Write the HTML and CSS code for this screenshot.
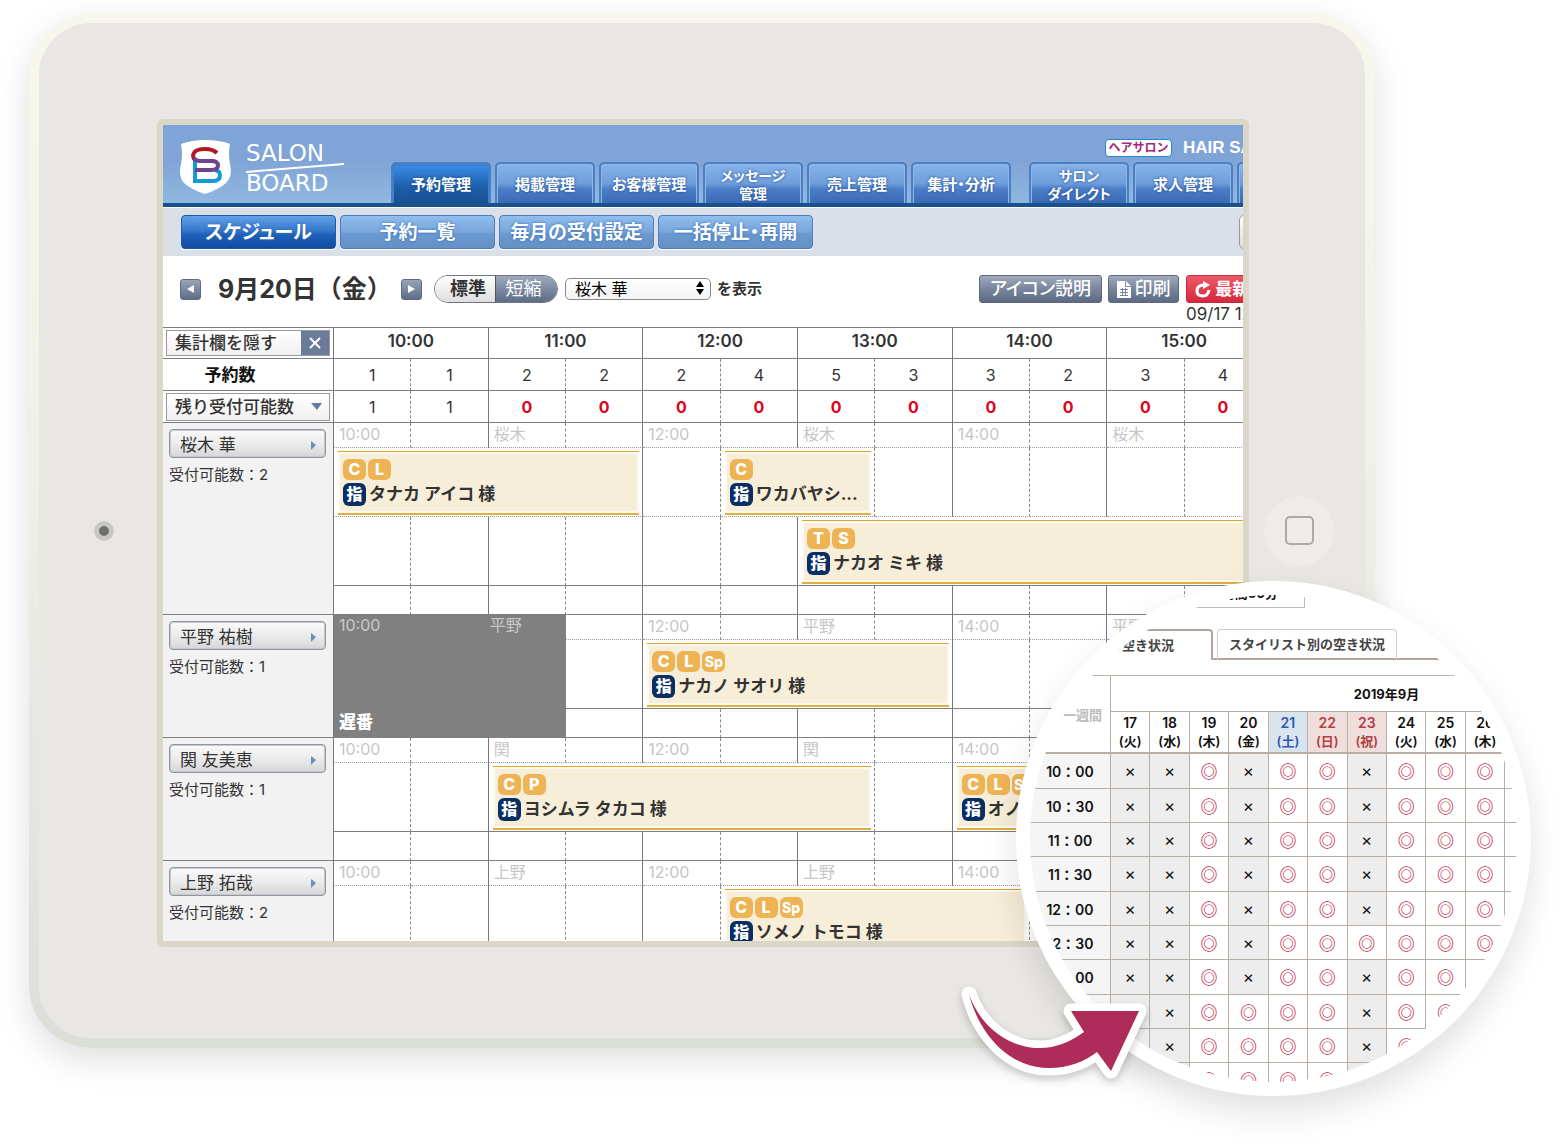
FILE: index.html
```html
<!DOCTYPE html>
<html lang="ja">
<head>
<meta charset="utf-8">
<title>SALON BOARD</title>
<link rel="stylesheet" href="styles.css">
</head>
<body>
<main class="stage">
  <div class="tablet">
    <div class="tablet-face">
      <span class="camera"></span>
      <div class="screen">
        <div class="app">
          <header class="header">
            <a class="logo" href="#">
              <svg class="logo-mark" viewBox="0 0 51 55" width="51" height="55" aria-hidden="true">
                <path fill="#fff" d="M1 4Q12 0 25 0Q40 0 50 4Q48 14 50 24Q53 36 46 43Q38 50 25 54Q12 50 4 43Q-2 36 1 24Q3 14 1 4Z"/>
                <g fill="none" stroke-width="4">
                  <path stroke="#129bd8" d="M15 19V41H33Q40 41 40 35Q40 31 35 30"/>
                  <path stroke="#b01822" d="M37 13Q33 9 25 9Q14 9 13 15Q13 18 15 20"/>
                  <path stroke="#6f4391" d="M14 18Q16 21 20 21H33Q38 22 38 25Q38 30 32 30H15"/>
                </g>
              </svg>
              <span class="logo-name">
                <span>SALON</span>
                <svg viewBox="0 0 98 10" width="98" height="10" aria-hidden="true"><path d="M0 9L98 1" stroke="#fff" stroke-width="2"/></svg>
                <span>BOARD</span>
              </span>
            </a>
            <div class="account"><span class="account-type">ヘアサロン</span><span>HAIR SALON</span></div>
            <nav class="tabs">
              <a class="tab tab-on" href="#">予約管理</a>
              <a class="tab" href="#">掲載管理</a>
              <a class="tab" href="#">お客様管理</a>
              <a class="tab tab-two" href="#">メッセージ<br>管理</a>
              <a class="tab" href="#">売上管理</a>
              <a class="tab" href="#">集計・分析</a>
              <a class="tab tab-two tab-group" href="#">サロン<br>ダイレクト</a>
              <a class="tab" href="#">求人管理</a>
              <a class="tab" href="#">設定</a>
            </nav>
          </header>
          <nav class="subnav">
            <a class="sub sub-on" href="#">スケジュール</a>
            <a class="sub" href="#">予約一覧</a>
            <a class="sub" href="#">毎月の受付設定</a>
            <a class="sub" href="#">一括停止・再開</a>
            <button class="help" type="button">ヘルプ</button>
          </nav>
          <div class="toolbar">
            <div class="day">
              <button class="step" type="button" aria-label="前日"><svg viewBox="0 0 7 8" width="7" height="8"><path fill="#fff" d="M7 0V8L0 4Z"/></svg></button>
              <h1>9月20日（金）</h1>
              <button class="step" type="button" aria-label="翌日"><svg viewBox="0 0 7 8" width="7" height="8"><path fill="#fff" d="M0 0V8L7 4Z"/></svg></button>
            </div>
            <div class="toggle"><button class="toggle-on" type="button">標準</button><button type="button">短縮</button></div>
            <label class="pick">
              <span class="pick-box">
                <select><option>桜木 華</option></select>
                <svg class="pick-arrows" viewBox="0 0 8 14" width="8" height="14" aria-hidden="true"><path d="M4 0L8 6H0ZM4 14L0 8H8Z"/></svg>
              </span>
              を表示
            </label>
            <div class="actions">
              <button class="action" type="button">アイコン説明</button>
              <button class="action action-print" type="button"><svg viewBox="0 0 14 17" width="14" height="17" aria-hidden="true"><path fill="#fff" d="M0 0H8V6H14V17H0ZM9 0L14 5H9Z"/><path stroke="#77849c" d="M3 8.500H11M3 11.500H11M3 14.500H11M5.500 7V15M8.500 7V15"/></svg>印刷</button>
              <div class="refresh">
                <button class="action action-red" type="button"><svg viewBox="0 0 16 17" width="16" height="17" aria-hidden="true"><path fill="none" stroke="#fff" stroke-width="3" d="M9 4Q2 4 2 10Q2 15 8 15Q13 15 14 9"/><path fill="#fff" d="M8 0L15 4L8 8Z"/></svg>最新に更新</button>
                <span>09/17 12:00</span>
              </div>
            </div>
          </div>

          <table class="schedule">
            <colgroup><col class="col-name"><col span="12"></colgroup>
            <thead>
              <tr class="row-hours">
                <th><button class="hide" type="button">集計欄を隠す<span class="hide-x"><svg viewBox="0 0 12 12" width="12" height="12" aria-hidden="true"><path stroke="#fff" stroke-width="2" d="M1 1L11 11M11 1L1 11"/></svg></span></button></th>
                <th colspan="2">10:00</th><th colspan="2">11:00</th><th colspan="2">12:00</th><th colspan="2">13:00</th><th colspan="2">14:00</th><th colspan="2">15:00</th>
              </tr>
              <tr class="row-count">
                <th><span class="count-title">予約数</span></th>
                <td class="half">1</td><td>1</td><td class="half">2</td><td>2</td><td class="half">2</td><td>4</td><td class="half">5</td><td>3</td><td class="half">3</td><td>2</td><td class="half">3</td><td>4</td>
              </tr>
              <tr class="row-count">
                <th><button class="remain" type="button">残り受付可能数<svg viewBox="0 0 11 7" width="11" height="7" aria-hidden="true"><path fill="#66799e" d="M0 0H11L6 7Z"/></svg></button></th>
                <td class="half">1</td><td>1</td><td class="half zero">0</td><td class="zero">0</td><td class="half zero">0</td><td class="zero">0</td><td class="half zero">0</td><td class="zero">0</td><td class="half zero">0</td><td class="zero">0</td><td class="half zero">0</td><td class="zero">0</td>
              </tr>
            </thead>
            <tbody>
              <tr class="row-label">
                <th class="staff" rowspan="4"><button class="staff-name" type="button">桜木 華<svg viewBox="0 0 5 9" width="5" height="9" aria-hidden="true"><path fill="#5e93c4" d="M0 0L5 4L0 9Z"/></svg></button><span>受付可能数：2</span></th>
                <td class="half">10:00</td><td></td><td class="half">桜木</td><td></td><td class="half">12:00</td><td></td><td class="half">桜木</td><td></td><td class="half">14:00</td><td></td><td class="half">桜木</td><td></td>
              </tr>
              <tr class="row-lane lane-more">
                <td colspan="4"><div class="booking"><div class="tags"><i>C</i><i>L</i></div><div class="guest"><b>指</b>タナカ アイコ 様</div></div></td>
                <td class="half"></td>
                <td class="half" colspan="2"><div class="booking"><div class="tags"><i>C</i></div><div class="guest"><b>指</b>ワカバヤシ...</div></div></td>
                <td></td><td class="half"></td><td></td><td class="half"></td><td></td>
              </tr>
              <tr class="row-lane">
                <td class="half"></td><td></td><td class="half"></td><td></td><td class="half"></td><td></td>
                <td colspan="6"><div class="booking"><div class="tags"><i>T</i><i>S</i></div><div class="guest"><b>指</b>ナカオ ミキ 様</div></div></td>
              </tr>
              <tr class="row-spare"><td class="half"></td><td></td><td class="half"></td><td></td><td class="half"></td><td></td><td class="half"></td><td></td><td class="half"></td><td></td><td class="half"></td><td></td></tr>
            </tbody>
            <tbody>
              <tr class="row-label">
                <th class="staff" rowspan="3"><button class="staff-name" type="button">平野 祐樹<svg viewBox="0 0 5 9" width="5" height="9" aria-hidden="true"><path fill="#5e93c4" d="M0 0L5 4L0 9Z"/></svg></button><span>受付可能数：1</span></th>
                <td class="late" colspan="3" rowspan="3"><div class="late-box"><span>10:00</span><span>平野</span><strong>遅番</strong></div></td>
                <td></td><td class="half">12:00</td><td></td><td class="half">平野</td><td></td><td class="half">14:00</td><td></td><td class="half">平野</td><td></td>
              </tr>
              <tr class="row-lane">
                <td></td>
                <td colspan="4"><div class="booking"><div class="tags"><i>C</i><i>L</i><i class="tag-two">Sp</i></div><div class="guest"><b>指</b>ナカノ サオリ 様</div></div></td>
                <td class="half"></td><td></td><td class="half"></td><td></td>
              </tr>
              <tr class="row-spare"><td></td><td class="half"></td><td></td><td class="half"></td><td></td><td class="half"></td><td></td><td class="half"></td><td></td></tr>
            </tbody>
            <tbody>
              <tr class="row-label">
                <th class="staff" rowspan="3"><button class="staff-name" type="button">関 友美恵<svg viewBox="0 0 5 9" width="5" height="9" aria-hidden="true"><path fill="#5e93c4" d="M0 0L5 4L0 9Z"/></svg></button><span>受付可能数：1</span></th>
                <td class="half">10:00</td><td></td><td class="half">関</td><td></td><td class="half">12:00</td><td></td><td class="half">関</td><td></td><td class="half">14:00</td><td></td><td class="half">関</td><td></td>
              </tr>
              <tr class="row-lane">
                <td class="half"></td><td></td>
                <td class="half" colspan="5"><div class="booking"><div class="tags"><i>C</i><i>P</i></div><div class="guest"><b>指</b>ヨシムラ タカコ 様</div></div></td>
                <td></td>
                <td colspan="4"><div class="booking"><div class="tags"><i>C</i><i>L</i><i class="tag-two">Sp</i></div><div class="guest"><b>指</b>オノ ユミ 様</div></div></td>
              </tr>
              <tr class="row-spare"><td class="half"></td><td></td><td class="half"></td><td></td><td class="half"></td><td></td><td class="half"></td><td></td><td class="half"></td><td></td><td class="half"></td><td></td></tr>
            </tbody>
            <tbody>
              <tr class="row-label">
                <th class="staff" rowspan="3"><button class="staff-name" type="button">上野 拓哉<svg viewBox="0 0 5 9" width="5" height="9" aria-hidden="true"><path fill="#5e93c4" d="M0 0L5 4L0 9Z"/></svg></button><span>受付可能数：2</span></th>
                <td class="half">10:00</td><td></td><td class="half">上野</td><td></td><td class="half">12:00</td><td></td><td class="half">上野</td><td></td><td class="half">14:00</td><td></td><td class="half">上野</td><td></td>
              </tr>
              <tr class="row-lane">
                <td class="half"></td><td></td><td class="half"></td><td></td><td class="half"></td>
                <td class="half" colspan="4"><div class="booking"><div class="tags"><i>C</i><i>L</i><i class="tag-two">Sp</i></div><div class="guest"><b>指</b>ソメノ トモコ 様</div></div></td>
                <td></td><td class="half"></td><td></td>
              </tr>
              <tr class="row-spare"><td class="half"></td><td></td><td class="half"></td><td></td><td class="half"></td><td></td><td class="half"></td><td></td><td class="half"></td><td></td><td class="half"></td><td></td></tr>
            </tbody>
          </table>
        </div>
      </div>
      <button class="home" type="button" aria-label="ホーム"><span></span></button>
    </div>
  </div>

  <section class="callout">
    <div class="lens">
      <div class="lens-page">
        <div class="duration">1時間30分</div>
        <div class="lens-tabs">
          <a class="lens-tab lens-tab-on" href="#">サロンの空き状況</a>
          <a class="lens-tab" href="#">スタイリスト別の空き状況</a>
        </div>
        <table class="slots">
          <colgroup><col class="col-time"><col span="14"></colgroup>
          <thead>
            <tr class="slots-month"><th class="prev" rowspan="2">前の一週間</th><th colspan="14">2019年9月</th></tr>
            <tr class="slots-days">
              <th>17<small>(火)</small></th><th>18<small>(水)</small></th><th>19<small>(木)</small></th><th>20<small>(金)</small></th><th class="sat">21<small>(土)</small></th><th class="sun">22<small>(日)</small></th><th class="sun">23<small>(祝)</small></th><th>24<small>(火)</small></th><th>25<small>(水)</small></th><th>26<small>(木)</small></th><th colspan="4"></th>
            </tr>
          </thead>
          <tbody>
            <tr><th>10：00</th><td class="no">×</td><td class="no">×</td><td>◎</td><td class="no">×</td><td>◎</td><td>◎</td><td class="no">×</td><td>◎</td><td>◎</td><td>◎</td><td colspan="4"></td></tr>
            <tr><th>10：30</th><td class="no">×</td><td class="no">×</td><td>◎</td><td class="no">×</td><td>◎</td><td>◎</td><td class="no">×</td><td>◎</td><td>◎</td><td>◎</td><td colspan="4"></td></tr>
            <tr><th>11：00</th><td class="no">×</td><td class="no">×</td><td>◎</td><td class="no">×</td><td>◎</td><td>◎</td><td class="no">×</td><td>◎</td><td>◎</td><td>◎</td><td colspan="4"></td></tr>
            <tr><th>11：30</th><td class="no">×</td><td class="no">×</td><td>◎</td><td class="no">×</td><td>◎</td><td>◎</td><td class="no">×</td><td>◎</td><td>◎</td><td>◎</td><td colspan="4"></td></tr>
            <tr><th>12：00</th><td class="no">×</td><td class="no">×</td><td>◎</td><td class="no">×</td><td>◎</td><td>◎</td><td class="no">×</td><td>◎</td><td>◎</td><td>◎</td><td colspan="4"></td></tr>
            <tr><th>12：30</th><td class="no">×</td><td class="no">×</td><td>◎</td><td class="no">×</td><td>◎</td><td>◎</td><td>◎</td><td>◎</td><td>◎</td><td>◎</td><td colspan="4"></td></tr>
            <tr><th>13：00</th><td class="no">×</td><td class="no">×</td><td>◎</td><td class="no">×</td><td>◎</td><td>◎</td><td class="no">×</td><td>◎</td><td>◎</td><td></td><td colspan="4"></td></tr>
            <tr><th>13：30</th><td class="no">×</td><td class="no">×</td><td>◎</td><td>◎</td><td>◎</td><td>◎</td><td class="no">×</td><td>◎</td><td>◎</td><td></td><td colspan="4"></td></tr>
            <tr><th>14：00</th><td class="no"></td><td class="no">×</td><td>◎</td><td>◎</td><td>◎</td><td>◎</td><td class="no">×</td><td>◎</td><td></td><td></td><td colspan="4"></td></tr>
            <tr><th>14：30</th><td class="no"></td><td class="no"></td><td>◎</td><td>◎</td><td>◎</td><td>◎</td><td class="no"></td><td></td><td></td><td></td><td colspan="4"></td></tr>
          </tbody>
        </table>
      </div>
    </div>
    <svg class="arrow" viewBox="950 975 210 120" width="210" height="120" aria-hidden="true">
      <path d="M969 994C977 1028 1005 1068 1049 1068C1068 1068 1084 1062 1097 1052L1111 1071L1139 1011H1071L1084 1032C1070 1042 1056 1048 1040 1048C1008 1048 980 1026 969 994Z" fill="#fff" stroke="#fff" stroke-width="15" stroke-linejoin="round"/>
      <path d="M969 994C977 1028 1005 1068 1049 1068C1068 1068 1084 1062 1097 1052L1111 1071L1139 1011H1071L1084 1032C1070 1042 1056 1048 1040 1048C1008 1048 980 1026 969 994Z" fill="#ae2c5a"/>
    </svg>
  </section>
</main>
</body>
</html>
```
FILE: styles.css
```css
* {
  box-sizing: border-box;
}

body {
  margin: 0;
  background: #fff;
  color: #333;
  font-family: Inter, "Noto Sans CJK JP", sans-serif;
  font-size: 17px;
}

a {
  color: inherit;
  text-decoration: none;
}

button,
select {
  margin: 0;
  padding: 0;
  border: 0;
  background: none;
  color: inherit;
  font: inherit;
}

svg {
  display: block;
  flex: none;
}

.stage {
  position: relative;
  overflow: hidden;
  padding: 13px 189px 96px 29px;
}

/* Tablet */

.tablet {
  padding: 10px;
  border-radius: 62px;
  background: linear-gradient(#f7f7ee, #f0f1e8 40%, #dcded8);
  box-shadow: 0 12px 34px rgba(0, 0, 0, 0.13);
}

.tablet-face {
  display: flex;
  align-items: center;
  padding: 0 31px 0 55px;
  border-radius: 52px;
  background: #e8e7e3;
}

.camera {
  flex: none;
  width: 20px;
  height: 20px;
  margin-right: 43px;
  border: 5px solid #c9c8c2;
  border-radius: 50%;
  background: #6f7170;
}

.screen {
  flex: 1;
  min-width: 0;
  aspect-ratio: 91 / 69;
  margin: 96px 0 91px;
  overflow: hidden;
  border: 6px solid #dad7c8;
  border-radius: 6px;
  background: #fff;
}

.home {
  display: grid;
  place-items: center;
  flex: none;
  width: 70px;
  height: 70px;
  margin-left: 15px;
  border-radius: 50%;
  background: #edece8;
}

.home span {
  width: 29px;
  height: 29px;
  border: 2px solid #aaa9a4;
  border-radius: 5px;
}

/* The app runs past the right edge of the screen */

.app {
  width: calc(100% + 120px);
}

.header {
  display: grid;
  grid-template-columns: 228px 1fr;
  grid-template-rows: 37px 41px;
  border-bottom: 4px solid #17528f;
  background: linear-gradient(#7ea4d9, #80a4d6 45%, #90b8e0);
}

.logo {
  grid-row: span 2;
  display: flex;
  gap: 15px;
  padding: 15px 0 0 17px;
}

.logo-name {
  padding-top: 3px;
  color: #fff;
  font: 23px/20px "DejaVu Sans", sans-serif;
}

.logo-name span {
  display: block;
}

.account {
  display: flex;
  align-items: center;
  justify-self: end;
  gap: 11px;
  width: 258px;
  padding-top: 8px;
  color: #fff;
  font: bold 17px "Liberation Sans", sans-serif;
}

.account-type {
  width: 67px;
  border: 1px solid #2a86cc;
  border-radius: 4px;
  background: #fff;
  color: #a3277c;
  font: bold 12px/16px Inter, "Noto Sans CJK JP", sans-serif;
  text-align: center;
}

.tabs {
  display: flex;
  gap: 4px;
}

.tab {
  display: grid;
  place-items: center;
  flex: none;
  width: 100px;
  padding-top: 2px;
  border: 2px solid #4a7fc6;
  border-bottom: 0;
  border-radius: 5px 5px 0 0;
  background: linear-gradient(#85b3e8, #6f9edb 50%, #4b7cc8 65%, #3c6ab4);
  box-shadow: inset 0 1px 0 1px #8db6e6;
  color: #fff;
  font-size: 15px;
  font-weight: bold;
  line-height: 18px;
  text-align: center;
  text-shadow: 0 0 3px #1b4a90;
  white-space: nowrap;
  font-feature-settings: "palt";
}

.tab-on {
  background: linear-gradient(#3b8eea, #1c5fa8 60%, #1a5090);
  box-shadow: inset 0 1px 0 1px #3a80ce;
}

.tab-two {
  font-size: 14px;
}

.tab-group {
  margin-left: 14px;
}

.subnav {
  display: flex;
  gap: 4px;
  padding: 7px 0 7px 18px;
  border-top: 1px solid #fff;
  background: #dbdfe8;
}

.sub {
  width: 155px;
  padding-top: 1px;
  border: 1px solid #4a7dbd;
  border-radius: 4px;
  background: linear-gradient(#8fbeef, #7aa5da 50%, #6a99d0 55%, #6690c6);
  box-shadow: 0 1px 1px #fff;
  color: #fff;
  font-size: 19px;
  font-weight: bold;
  line-height: 31px;
  text-align: center;
  text-shadow: 0 0 3px #2f68b5;
  font-feature-settings: "palt";
}

.sub-on {
  border-color: #1d5aab;
  background: linear-gradient(#63a2e9, #3678cb 45%, #1c5fb8 60%, #124c9f);
}

.help {
  width: 124px;
  margin-left: auto;
  border: 1px solid #999;
  border-radius: 5px;
  background: linear-gradient(#fff, #ddd);
}

/* Toolbar */

.toolbar {
  display: flex;
  align-items: flex-start;
  padding: 19px 0 2px 17px;
}

.day {
  display: flex;
  align-items: center;
  height: 28px;
  margin-right: 12px;
}

.day h1 {
  width: 183px;
  margin: 0 0 0 17px;
  font-size: 25px;
  line-height: 28px;
  white-space: nowrap;
}

.step {
  display: grid;
  place-items: center;
  width: 21px;
  height: 21px;
  border: 1px solid #5f6b82;
  border-radius: 3px;
  background: linear-gradient(#98a4b8, #5e6c87);
}

.toggle {
  display: flex;
  margin-right: 7px;
  overflow: hidden;
  border: 1px solid #6c7687;
  border-radius: 14px;
}

.toggle button {
  width: 61px;
  height: 26px;
  padding-right: 6px;
  background: linear-gradient(#9da8ba, #5d6b86);
  color: #fff;
  font-size: 18px;
  line-height: 26px;
}

.toggle .toggle-on {
  padding: 0 0 0 6px;
  border-right: 1px solid #555;
  background: linear-gradient(#fff, #ddd);
  color: #333;
  font-weight: bold;
}

.pick {
  display: flex;
  align-items: center;
  gap: 6px;
  height: 28px;
  font-size: 15px;
  font-weight: bold;
  line-height: 20px;
}

.pick-box {
  position: relative;
}

.pick select {
  display: block;
  width: 146px;
  height: 22px;
  padding-left: 9px;
  appearance: none;
  border: 1px solid #888;
  border-radius: 5px;
  background: linear-gradient(#fff, #f3f3f3);
  color: #000;
  font-size: 16px;
  font-weight: normal;
  line-height: 20px;
}

.pick-arrows {
  position: absolute;
  top: 3px;
  right: 7px;
  pointer-events: none;
}

.actions {
  display: flex;
  align-items: flex-start;
  gap: 6px;
  width: 384px;
  margin-left: auto;
}

.action {
  display: flex;
  align-items: center;
  justify-content: center;
  gap: 4px;
  width: 123px;
  height: 28px;
  border: 1px solid #5b687f;
  border-radius: 3px;
  background: linear-gradient(#a0aabc, #78859c 50%, #5c6a84);
  color: #fff;
  font-size: 18px;
  font-weight: 500;
  line-height: 26px;
  white-space: nowrap;
  font-feature-settings: "palt";
}

.action-print {
  width: 71px;
  margin-right: 1px;
}

.action-red {
  border-color: #c42d3e;
  background: linear-gradient(#ec5b66, #d9273c);
  font-size: 17px;
  font-weight: bold;
}

.refresh {
  line-height: 22px;
}

/* Schedule */

.schedule {
  width: 1099px;
  table-layout: fixed;
  border-top: 1px solid #7b7f85;
  border-spacing: 0;
}

.col-name {
  width: 171px;
}

.schedule th,
.schedule td {
  padding: 0;
  border-right: 1px solid #74787e;
  border-bottom: 1px solid #7b7f85;
}

.schedule .half {
  border-right: 1px dashed #86898d;
}

.row-hours th {
  height: 31px;
  padding-bottom: 4px;
  font-weight: 600;
  line-height: 20px;
}

.schedule .row-hours th:first-child {
  padding: 0;
}

.row-count th,
.row-count td {
  height: 32px;
  font-size: 16px;
  line-height: 20px;
  text-align: center;
}

.schedule .zero {
  color: #e0001b;
  font-weight: bold;
}

.count-title {
  padding-right: 36px;
  color: #111;
  font-size: 17px;
}

.hide,
.remain {
  display: flex;
  align-items: center;
  justify-content: space-between;
  width: 164px;
  height: 26px;
  margin-left: 3px;
  padding-left: 8px;
  border: 1px solid #999;
  background: linear-gradient(#fff, #f0f0f0);
  font-size: 17px;
  font-weight: 500;
  line-height: 24px;
}

.remain {
  height: 28px;
  padding-right: 7px;
}

.hide-x {
  display: grid;
  place-items: center;
  width: 28px;
  height: 24px;
  background: #6a7b9c;
}

.schedule .staff {
  padding: 6px 8px 0 6px;
  background: #f2f2f2;
  font-size: 15px;
  font-weight: normal;
  line-height: 20px;
  text-align: left;
  vertical-align: top;
}

.staff-name {
  display: flex;
  align-items: center;
  justify-content: space-between;
  width: 157px;
  height: 29px;
  margin-bottom: 7px;
  padding: 3px 9px 0 10px;
  border: 1px solid #90959e;
  border-radius: 4px;
  background: linear-gradient(#fafafa, #ececec 50%, #d6d6d6);
  box-shadow: inset 0 0 0 1px #c5c8cc;
  font-size: 17px;
}

.row-label td {
  height: 25px;
  color: #c6c6c6;
  font-size: 16px;
  line-height: 20px;
  vertical-align: top;
}

.schedule .row-label td:not(.late) {
  padding: 1px 0 0 5px;
  border-bottom: 1px dotted #999;
}

.row-lane td {
  height: 69px;
}

.schedule .lane-more td {
  border-bottom: 1px dotted #999;
}

.row-spare td {
  height: 29px;
}

.booking {
  height: 64px;
  margin: 1px 3px 0 4px;
  padding: 7px 5px 0;
  overflow: hidden;
  border-top: 1px solid #dba52f;
  border-bottom: 2px solid #dfb03f;
  background: #f7eed9;
  box-shadow: inset 0 0 0 2px #fefaf0;
}

.tags {
  display: flex;
  gap: 2px;
  margin-bottom: 3px;
}

.tags i {
  width: 23px;
  height: 21px;
  border-radius: 6px;
  background: #eeb353;
  color: #fff;
  font-size: 16px;
  font-style: normal;
  font-weight: 800;
  line-height: 21px;
  text-align: center;
}

.tags .tag-two {
  font-size: 14px;
}

.guest {
  display: flex;
  gap: 3px;
  font-weight: bold;
  line-height: 23px;
  white-space: nowrap;
}

.guest b {
  width: 23px;
  height: 23px;
  border-radius: 6px;
  background: #082e64;
  color: #fff;
  font-size: 16px;
  text-align: center;
}

.schedule .late {
  border-color: #808080;
  background: #808080;
}

.late-box {
  display: grid;
  grid-template: 22px 1fr / 2fr 1fr;
  height: 120px;
  padding-left: 5px;
  color: #c9c9c9;
}

.late-box strong {
  align-self: end;
  color: #fff;
  font-size: 17px;
  font-weight: 900;
  line-height: 26px;
}

/* Magnified booking calendar */

.callout {
  position: absolute;
  top: 581px;
  right: 33px;
}

.lens {
  width: 515px;
  height: 515px;
  overflow: hidden;
  border: 14px solid #fff;
  border-radius: 50%;
  background: #fff;
  box-shadow: 0 16px 34px rgba(0, 0, 0, 0.12);
}

.lens-page {
  width: 640px;
  margin-top: -16px;
  color: #111;
  font-size: 13px;
  font-weight: bold;
}

.duration {
  width: 124px;
  height: 29px;
  margin-left: 151px;
  padding-right: 26px;
  border: 1px solid #bbb;
  line-height: 27px;
  text-align: right;
}

.lens-tabs {
  display: flex;
  gap: 4px;
  margin-top: 21px;
  background: linear-gradient(#b5a49d, #b5a49d) 181px 100% / 100% 2px no-repeat;
  color: #444;
  line-height: 29px;
}

.lens-tab {
  width: 180px;
  border: 1px solid #ccc;
  border-radius: 4px 4px 0 0;
  border-bottom: 0;
  text-align: center;
}

.lens-tab-on {
  width: 183px;
  padding-right: 37px;
  border: 2px solid #b5a49d;
  border-bottom: 0;
  text-align: right;
}

.slots {
  width: 633px;
  margin-top: 15px;
  table-layout: fixed;
  border-top: 1px solid #bdb6ad;
  border-spacing: 0;
}

.col-time {
  width: 81px;
}

.slots th,
.slots td {
  padding: 0;
  border-right: 1px solid #b7afa6;
  border-bottom: 1px solid #b7afa6;
  text-align: center;
}

.slots-month th {
  height: 36px;
}

.slots .prev {
  padding: 0 8px 0 0;
  border-bottom-width: 2px;
  color: #bbb;
  text-align: right;
  white-space: nowrap;
}

.slots-days th {
  height: 42px;
  border-bottom-width: 2px;
  font-size: 14px;
  font-weight: 600;
  line-height: 19px;
}

.slots-days small {
  display: block;
  font-size: 13px;
}

.slots .sat {
  background: #d9e4ee;
  color: #3157b4;
}

.slots .sun {
  background: #efdedc;
  color: #b33f45;
}

.slots tbody th {
  background: #f5f5f5;
  font-size: 14px;
  font-weight: 600;
}

.slots tbody td {
  height: 34px;
  color: #c21f4a;
  font-family: "Noto Sans CJK JP", sans-serif;
  font-size: 17px;
  font-weight: 700;
  line-height: 18px;
}

.slots tbody tr:nth-child(3n + 1) td {
  height: 35px;
}

.slots tbody .no {
  background: #ededed;
  color: #111;
  font-family: Inter, sans-serif;
  font-weight: normal;
}

.arrow {
  position: absolute;
  top: 394px;
  left: -66px;
  filter: drop-shadow(0 4px 4px rgba(0, 0, 0, 0.2));
}
```
